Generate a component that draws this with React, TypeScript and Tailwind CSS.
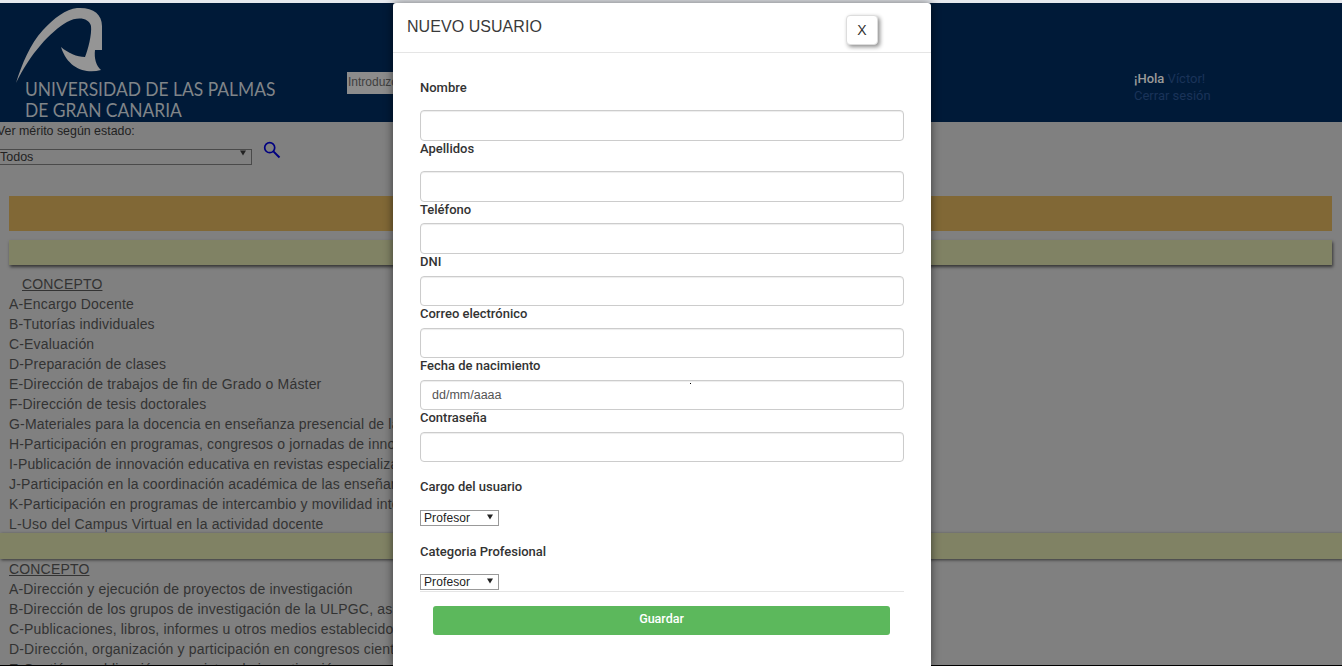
const c1 = ["A-Encargo Docente","B-Tutorías individuales","C-Evaluación","D-Preparación de clases","E-Dirección de trabajos de fin de Grado o Máster","F-Dirección de tesis doctorales","G-Materiales para la docencia en enseñanza presencial de la ULPGC","H-Participación en programas, congresos o jornadas de innovación","I-Publicación de innovación educativa en revistas especializadas","J-Participación en la coordinación académica de las enseñanzas","K-Participación en programas de intercambio y movilidad internacional","L-Uso del Campus Virtual en la actividad docente"];
const c2 = ["A-Dirección y ejecución de proyectos de investigación","B-Dirección de los grupos de investigación de la ULPGC, así como","C-Publicaciones, libros, informes u otros medios establecidos","D-Dirección, organización y participación en congresos científicos","E-Gestión y publicación en revistas de investigación"];

function Arrow() {
  return (
    <svg width="8" height="8" viewBox="0 0 8 8" className="absolute pointer-events-none">
      <path d="M1 1.5H7L4 6.5Z" fill="currentColor" />
    </svg>
  );
}

function SmallSelect({ className }: { className: string }) {
  return (
    <div className={"relative w-[79px] flex items-center " + className}>
      <select className="appearance-none w-full h-full border border-[#999] bg-white pl-[3px] text-[12px] tracking-[0.1px] leading-none text-[#222] rounded-none">
        <option>Profesor</option>
      </select>
      <span className="absolute right-[5px] top-[3px] w-2 h-2 text-[#222] flex"><Arrow /></span>
    </div>
  );
}

const labelCls = "block h-[14px] leading-[15px] text-[13px] font-medium text-[#333] font-['Roboto',sans-serif] ";

function Field({ label, mb, h, placeholder }: { label: string; mb: string; h: string; placeholder?: string }) {
  return (
    <>
      <label className={labelCls + mb}>{label}</label>
      <input
        placeholder={placeholder}
        className={"block w-full rounded-[4px] border border-[#ccc] bg-white px-[11px] text-[12.5px] text-[#555] placeholder:text-[#555] shadow-[inset_0_1px_1px_rgba(0,0,0,0.075)] " + h}
      />
    </>
  );
}

export default function App() {
  return (
    <div className="relative h-[666px] overflow-hidden bg-[#808080] flex flex-col font-['Liberation_Sans',Arial,sans-serif]">
      <div className="h-[3px] shrink-0 bg-[#e6e9ee]" />
      <div className="flex-1 min-h-0 overflow-hidden">
        <header className="h-[119px] bg-[#001a38] relative flex">
          <div className="w-[347px] shrink-0 relative">
            <svg width="110" height="85" viewBox="0 0 110 85" className="absolute left-0 top-[-3px]">
              <path d="M16 83C22 64 30 44 43 30C54 18 66 9 77 8C93 7 102 14 102 26L102 50L95 50C94 58 96 66 101 70C86 74 68 69 61 47C68 53 77 57 85 57C88 50 92 34 91 26C89 18 78 16 67 22C50 32 30 54 16 83Z" fill="#959595" />
            </svg>
            <div className="absolute left-[25px] top-[75px] text-[20px] leading-[21px] text-[#808589] whitespace-nowrap font-['Lato',sans-serif] origin-left scale-x-[0.87]">
              <div>UNIVERSIDAD DE LAS PALMAS</div>
              <div>DE GRAN CANARIA</div>
            </div>
          </div>
          <div className="w-[180px] h-[22px] mt-[69px] bg-[#8c8c8c] text-[#404040] text-[12px] leading-[20px] px-[1px] overflow-hidden">Introduzca texto</div>
          <div className="absolute left-[1134px] top-[67px] text-[13px] leading-[17px] font-['Roboto',sans-serif]">
            <div className="text-[#1a3358]"><b className="text-[#9a9a9a] font-medium">¡Hola</b> Víctor!</div>
            <div className="text-[#1a3358]">Cerrar sesión</div>
          </div>
        </header>
        <section className="text-[#333]">
          <div className="h-[74px] relative">
            <p className="ml-[-3px] pt-[1px] text-[12.4px] leading-[16px] text-[#222]">Ver mérito según estado:</p>
            <div className="flex">
              <div className="relative w-[252px] h-[16px] mt-[10px] -translate-y-[5px]">
                <select className="appearance-none ml-[-1px] w-[253px] h-full border border-[#4a4a4a] bg-[#808080] text-[12.5px] leading-none text-[#222] rounded-none">
                  <option>Todos</option>
                </select>
                <span className="absolute right-[5px] top-[5px] w-2 h-2 text-[#222] flex"><Arrow /></span>
              </div>
              <svg width="18" height="18" viewBox="0 0 18 18" fill="none" stroke="#000080" strokeWidth="1.7" className="ml-[11px] mt-[2px]">
                <circle cx="6.7" cy="6.7" r="5" />
                <path d="M10.4 10.4L16.5 16.5" strokeWidth="2" />
              </svg>
            </div>
          </div>
          <div className="mx-[9px] mr-[10px] h-[35px] bg-[#816836]" />
          <div className="mx-[9px] mr-[10px] mt-[9px] h-[25px] bg-[#808264] shadow-[1px_2px_3px_rgba(0,0,0,0.6)]" />
          <div className="pt-[9px] text-[14px] leading-[20px] tracking-[0.17px]">
            <div className="ml-[22px] underline">CONCEPTO</div>
            {c1.map((t) => <div key={t} className="ml-[9px] whitespace-nowrap">{t}</div>)}
          </div>
          <div className="mt-[-1px] h-[26px] bg-[#808264] shadow-[1px_1px_3px_rgba(0,0,0,0.6)]" />
          <div className="text-[14px] leading-[20px] tracking-[0.17px]">
            <div className="ml-[9px] underline">CONCEPTO</div>
            {c2.map((t) => <div key={t} className="ml-[9px] whitespace-nowrap">{t}</div>)}
          </div>
        </section>
      </div>
      <div className="h-px shrink-0 bg-black" />

      <div className="absolute left-[393px] top-[3px] w-[538px] h-[663px] bg-white rounded-t-[3px] shadow-[0_0_10px_rgba(0,0,0,0.55)]">
        <div className="h-[50px] border-b border-[#e5e5e5] relative">
          <h2 className="absolute left-[14px] top-[14px] text-[16px] leading-[20px] tracking-[0.05px] text-[#3a3a3a] font-normal">NUEVO USUARIO</h2>
          <button className="absolute left-[453px] top-[12px] w-[32px] h-[30px] rounded-[4px] border border-[#ddd] bg-white text-[14px] text-[#333] shadow-[2px_2px_4px_rgba(0,0,0,0.45)]">X</button>
        </div>
        <div className="px-[27px] pt-[27px]">
          <Field label="Nombre" mb="mb-[16px]" h="h-[31px]" />
          <Field label="Apellidos" mb="mb-[16px]" h="h-[31px]" />
          <Field label="Teléfono" mb="mb-[7px]" h="h-[31px]" />
          <Field label="DNI" mb="mb-[8px]" h="h-[30px]" />
          <Field label="Correo electrónico" mb="mb-[8px]" h="h-[30px]" />
          <Field label="Fecha de nacimiento" mb="mb-[8px]" h="h-[30px]" placeholder="dd/mm/aaaa" />
          <Field label="Contraseña" mb="mb-[8px]" h="h-[30px]" />
          <label className={labelCls + "mt-[17px] mb-[17px]"}>Cargo del usuario</label>
          <SmallSelect className="h-[16px]" />
          <label className={labelCls + "mt-[18px] mb-[16px]"}>Categoria Profesional</label>
          <SmallSelect className="h-[16px]" />
          <div className="mt-[1px] border-t border-[#e5e5e5]" />
          <button className="block mt-[14px] ml-[13px] w-[457px] h-[29px] pb-[2px] rounded-[3px] bg-[#5cb85c] text-white text-[12.5px] font-medium font-['Roboto',sans-serif]">Guardar</button>
        </div>
        <span className="absolute left-[297px] top-[380px] w-px h-px bg-black" />
      </div>
    </div>
  );
}
